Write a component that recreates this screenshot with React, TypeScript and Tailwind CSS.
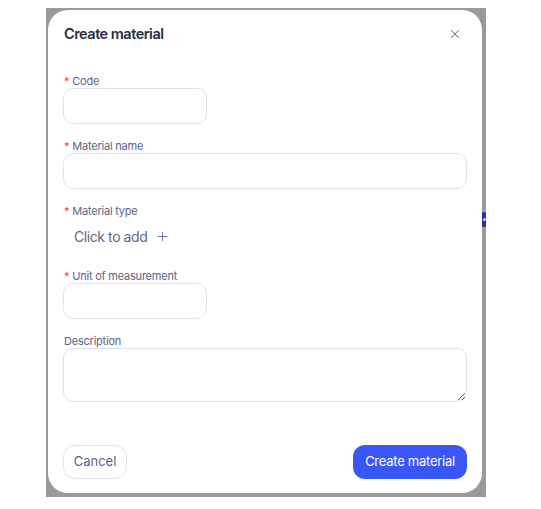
import { X, Plus } from "lucide-react";

const font = { fontFamily: "Inter, 'Noto Sans', sans-serif" };

const Label = ({ text, required = true }: { text: string; required?: boolean }) => (
  <label className="flex h-[14px] items-center gap-[3px] pl-px text-[11px] leading-[14px] tracking-[-0.02em] text-[#5b6388]">
    {required && <span className="text-[#ef4444]">*</span>}
    <span>{text}</span>
  </label>
);

const App = () => {
  return (
    <div className="h-[509px] w-[541px] bg-white" style={font}>
      <div className="relative ml-[46px] mt-[8px] h-[489px] w-[440px] overflow-hidden bg-[#9a9a9a]">
        {/* widget peeking out behind the modal */}
        <div className="absolute left-[429px] top-[204px] flex size-[15px] items-center justify-end rounded-full bg-[#2634a8] pr-[4px]">
          <span className="size-[3px] rounded-full bg-[#c9cdf0]" />
        </div>

        <div className="relative z-10 ml-[2px] mt-[2px] flex h-[483px] w-[434px] flex-col rounded-[20px] bg-white px-[15px] pb-[14px] pt-[14px]">
          <div className="flex h-[20px] items-center justify-between">
            <h2 className="pl-px text-[14.5px] font-semibold tracking-[-0.035em] text-[#2a2d3e]">
              Create material
            </h2>
            <button className="mr-[5px] text-[#6b7194]">
              <X size={14} strokeWidth={1.8} />
            </button>
          </div>

          <form className="mt-[30px] flex flex-col gap-[15px]">
            <div className="flex flex-col">
              <Label text="Code" />
              <input className="h-9 w-[144px] rounded-[10px] border border-[#e2e3f0] px-3 text-sm outline-none" />
            </div>

            <div className="flex flex-col">
              <Label text="Material name" />
              <input className="h-9 w-full rounded-[10px] border border-[#e2e3f0] px-3 text-sm outline-none" />
            </div>

            <div className="flex flex-col">
              <Label text="Material type" />
              <button
                type="button"
                className="flex h-9 items-center gap-[8px] self-start px-[11px] text-[14px] tracking-[-0.03em] text-[#5f6789]"
              >
                Click to add
                <Plus size={15} strokeWidth={1.4} />
              </button>
            </div>

            <div className="flex flex-col">
              <Label text="Unit of measurement" />
              <input className="h-9 w-[144px] rounded-[10px] border border-[#e2e3f0] px-3 text-sm outline-none" />
            </div>

            <div className="flex flex-col">
              <Label text="Description" required={false} />
              <textarea className="h-[54px] w-full rounded-[10px] border border-[#e2e3f0] px-3 py-2 text-sm outline-none" />
            </div>
          </form>

          <div className="mt-auto flex items-center justify-between">
            <button className="h-[34px] w-[64px] rounded-[12px] border border-[#e2e3f0] text-[13px] text-[#5b6388]">
              Cancel
            </button>
            <button className="h-[34px] w-[114px] rounded-[12px] bg-[#3a56f5] text-[13px] tracking-[-0.02em] text-white">
              Create material
            </button>
          </div>
        </div>
      </div>
    </div>
  );
};

export default App;
